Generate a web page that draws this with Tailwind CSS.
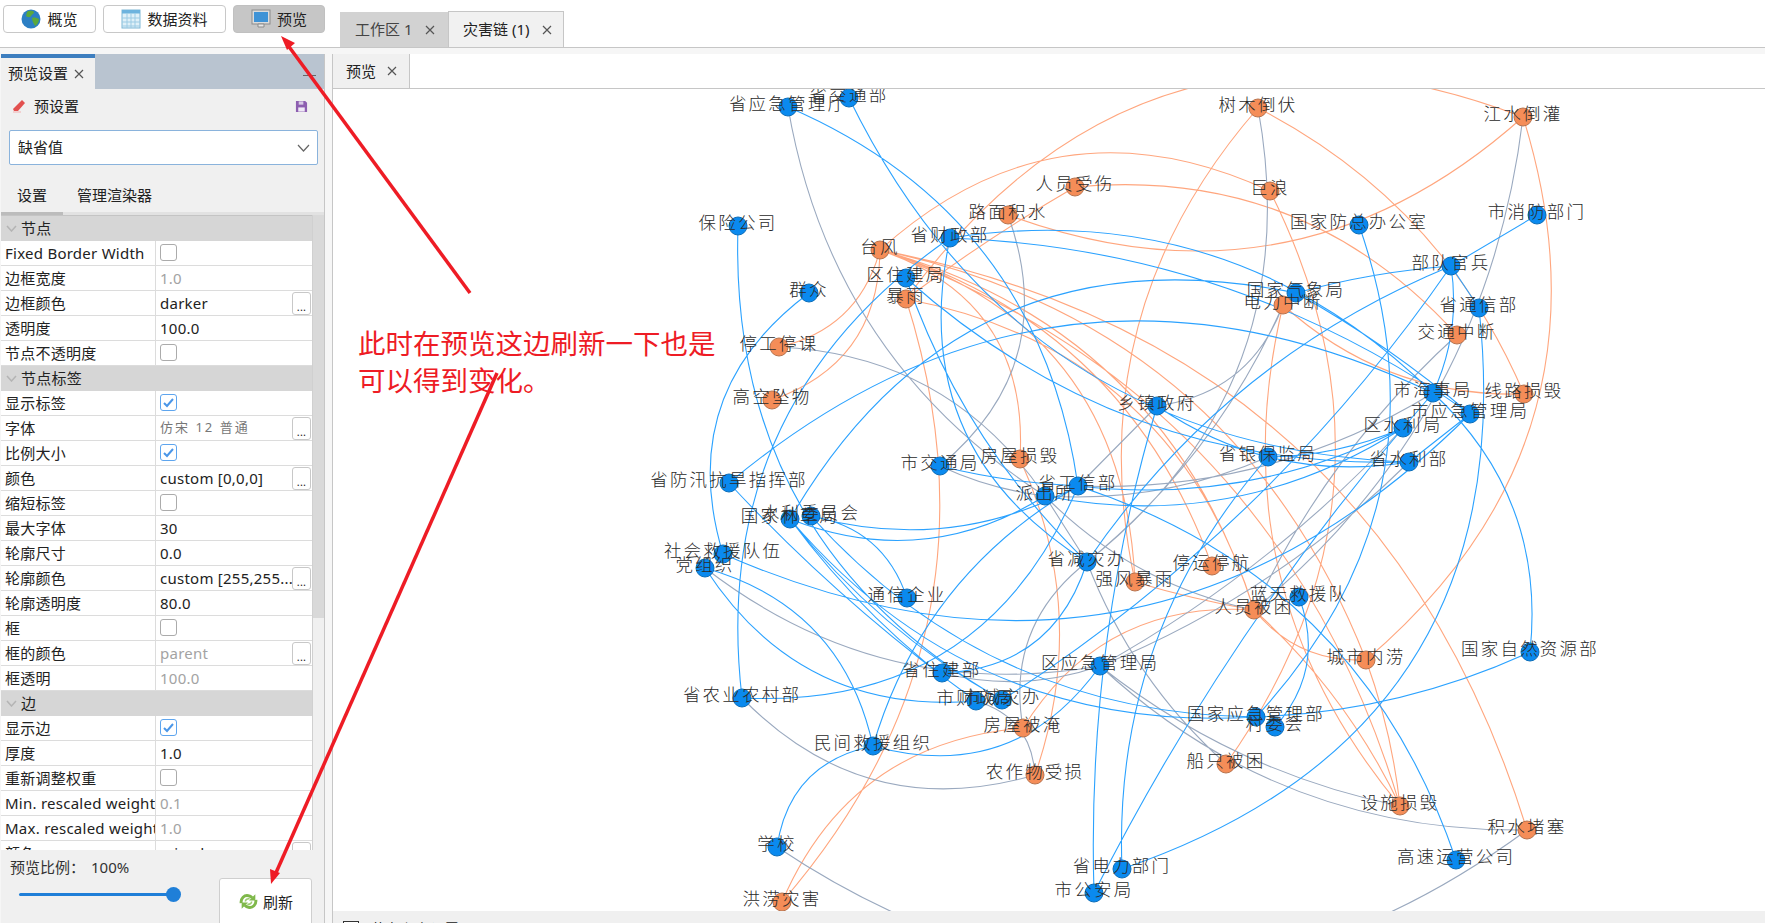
<!DOCTYPE html>
<html lang="en">
<head>
  <meta charset="UTF-8" />
  <title>灾害链 - 预览</title>
  <script src="https://cdn.jsdelivr.net/npm/@tailwindcss/browser@4"></script>
</head>
<body class="bg-[#f6f6f6] font-['Noto_Sans','Noto_Sans_CJK_SC',sans-serif] text-[#222]">
<div class="relative flex h-[923px] w-[1765px] flex-col overflow-hidden">

  <!-- Top bar -->
  <div class="flex h-[48px] shrink-0 border-b border-[#c6c6c6] bg-white">
    <div class="flex gap-[7px] pl-[3px] pt-[5px]">
      <button class="flex h-[28px] w-[93px] items-center justify-center gap-[6px] rounded-[4px] border border-[#c8c8c8] bg-white text-[15px]">
        <svg class="h-[20px] w-[20px]" viewBox="0 0 20 20"><circle cx="10" cy="10" r="9.5" fill="#2c7fc4"/><path d="M6 3c3-2 6-1 7 0 0 2-2 2-3 4-1 2-4 1-5 0zM11 9c2-1 5 0 7 1 0 3-2 6-4 7-1-2-3-5-3-8z" fill="#5aa83c"/></svg>
        <span>概览</span>
      </button>
      <button class="flex h-[28px] w-[123px] items-center justify-center gap-[6px] rounded-[4px] border border-[#c8c8c8] bg-white text-[15px]">
        <svg class="h-[20px] w-[20px]" viewBox="0 0 20 20"><rect x="1" y="1" width="18" height="18" fill="#dff0f8" stroke="#7fb7d6"/><rect x="1" y="1" width="18" height="3.5" fill="#6db3de"/><path d="M1 9h18M1 13h18M1 17h18M6 4v15M10 4v15M14 4v15" stroke="#9ccbe4"/></svg>
        <span>数据资料</span>
      </button>
      <button class="flex h-[28px] w-[92px] items-center justify-center gap-[6px] rounded-[4px] border border-[#c0c0c0] bg-[#c6c6c6] text-[15px]">
        <svg class="h-[20px] w-[20px]" viewBox="0 0 20 20"><rect x="1" y="1" width="18" height="14" fill="#dcdcdc" stroke="#8b8b8b"/><rect x="3" y="3" width="14" height="10" fill="#3f93d6"/><path d="M7 15h6v3H7z" fill="#e8e8e8" stroke="#8b8b8b"/></svg>
        <span>预览</span>
      </button>
    </div>
    <div class="ml-[15px] flex items-end self-end">
      <div class="flex h-[35px] w-[108px] items-center gap-[13px] bg-[#d2d2d2] pl-[15px] text-[15px] text-[#444]">
        <span>工作区 1</span>
        <svg class="h-[10px] w-[10px]" viewBox="0 0 10 10"><path d="M1 1l8 8M9 1l-8 8" stroke="#555" stroke-width="1.2"/></svg>
      </div>
      <div class="flex h-[36px] w-[116px] items-center gap-[13px] border border-b-0 border-[#c6c6c6] bg-[#f1f1f1] pl-[14px] text-[15px]">
        <span>灾害链 (1)</span>
        <svg class="h-[10px] w-[10px]" viewBox="0 0 10 10"><path d="M1 1l8 8M9 1l-8 8" stroke="#555" stroke-width="1.2"/></svg>
      </div>
    </div>
  </div>

  <div class="flex min-h-0 flex-1 pt-[6px]">
    <!-- Left panel -->
    <div class="ml-[1px] flex w-[324px] shrink-0 flex-col border-r border-[#c6c6c6] bg-[#f0f0f0]">
      <div class="flex h-[35px] shrink-0 bg-[#b9c4d0]">
        <div class="flex w-[94px] items-center gap-[6px] border-t-[4px] border-[#3d7ebf] bg-[#f0f0f0] pl-[7px] text-[15px]">
          <span>预览设置</span>
          <svg class="h-[10px] w-[10px]" viewBox="0 0 10 10"><path d="M1 1l8 8M9 1l-8 8" stroke="#555" stroke-width="1.2"/></svg>
        </div>
        <div class="ml-auto mr-[8px] mt-[21px] h-[1px] w-[13px] bg-[#666]"></div>
      </div>
      <div class="flex h-[41px] shrink-0 items-start pl-[11px] pr-[16px] pt-[6px] text-[15px]">
        <svg class="mr-[8px] mt-[4px] h-[14px] w-[14px]" viewBox="0 0 14 14"><path d="M10 1l3 3-7 8H2l-1-2z" fill="#e2504f"/><path d="M1 13h8" stroke="#f2b0b0"/></svg>
        <span>预设置</span>
        <svg class="ml-auto mt-[5px] h-[13px] w-[13px]" viewBox="0 0 14 14"><path d="M1 1h10l2 2v10H1z" fill="#8d5fb0"/><rect x="4" y="1.500" width="5" height="3.500" fill="#d8cbe6"/><rect x="3.500" y="8" width="7" height="4.500" fill="#efe9f6"/></svg>
      </div>
      <div class="ml-[8px] mr-[6px] flex h-[35px] shrink-0 items-center rounded-[2px] border border-[#8ab3dc] bg-white pl-[8px] pr-[7px] text-[15px]">
        <span>缺省值</span>
        <svg class="ml-auto h-[8px] w-[13px]" viewBox="0 0 13 8"><path d="M1 1l5.500 6L12 1" fill="none" stroke="#666" stroke-width="1.2"/></svg>
      </div>
      <div class="mt-[13px] flex h-[37px] shrink-0 border-b-[3px] border-[#e2e2e2] text-[15px]">
        <div class="mb-[-3px] flex w-[62px] items-center justify-center border-b-[3px] border-[#bcbcbc]">设置</div>
        <div class="ml-[14px] flex items-center">管理渲染器</div>
      </div>
      <div class="flex min-h-0 flex-1">
        <div id="rows" class="h-full w-[311px] shrink-0 overflow-hidden border-t border-[#c4c4c4] tracking-[0.25px]"></div>
        <div class="w-[12px] shrink-0 border-l border-[#d0d0d0]"><div class="h-[403px] bg-[#d9d9d9]"></div></div>
      </div>
      <div class="flex h-[73px] shrink-0">
        <div class="w-[218px] pl-[9px] pt-[6px] text-[15px] text-[#333]">
          <div class="flex gap-[6px]"><span>预览比例：</span><span>100%</span></div>
          <div class="relative ml-[9px] mt-[14px] h-[3px] w-[154px] rounded bg-[#1f7fd8]">
            <div class="absolute left-[147px] top-[-6px] h-[15px] w-[15px] rounded-full bg-[#1f7fd8]"></div>
          </div>
        </div>
        <button class="mt-[28px] flex h-[60px] w-[93px] items-start justify-center gap-[4px] rounded-[3px] border border-[#cfcfcf] bg-white pt-[12px] text-[15px]">
          <svg class="h-[21px] w-[21px]" viewBox="0 0 20 20"><path d="M3 11.500C2.500 7 6 3.500 10 4.500c1.500.3 2.500 1 3.500 2M17 8.500c.5 4.500-3 8-7 7-1.500-.3-2.500-1-3.500-2" fill="none" stroke="#7fb84a" stroke-width="2.800"/><path d="M16.500 3v6h-6zM3.500 17v-6h6z" fill="#7fb84a"/><path d="M7 10c0-2 2-3 4-2.500M13 10c0 2-2 3-4 2.500" fill="none" stroke="#9ccc6e" stroke-width="1.500"/></svg>
          <span>刷新</span>
        </button>
      </div>
    </div>

    <!-- Right area -->
    <div class="ml-[7px] flex min-w-0 flex-1 flex-col border-l border-[#c6c6c6]">
      <div class="flex h-[35px] shrink-0 border-b border-[#c6c6c6] bg-white">
        <div class="flex w-[77px] items-center gap-[11px] border-r border-[#c6c6c6] bg-[#f0f0f0] pl-[13px] text-[15px]">
          <span>预览</span>
          <svg class="h-[10px] w-[10px]" viewBox="0 0 10 10"><path d="M1 1l8 8M9 1l-8 8" stroke="#555" stroke-width="1.2"/></svg>
        </div>
      </div>
      <div class="relative min-h-0 flex-1 bg-white">
        <svg id="graph" class="absolute left-0 top-0 h-full w-full" viewBox="333 89 1432 822" preserveAspectRatio="none"></svg>
      </div>
      <div class="flex h-[12px] shrink-0 items-start gap-[12px] overflow-hidden bg-[#f0f0f0] pl-[10px] pt-[10px] text-[14px] leading-[16px]">
        <span class="h-[16px] w-[16px] shrink-0 border border-[#333] bg-white"></span><span>节点 颜色设置</span>
      </div>
    </div>
  </div>

  <!-- Red annotation over the page -->
  <svg class="pointer-events-none absolute left-0 top-0" width="1765" height="923" viewBox="0 0 1765 923">
    <path d="M470 293L287 44" stroke="#ee1c25" stroke-width="3.500" fill="none"/>
    <path d="M281 36l14 7-8 7z" fill="#ee1c25"/>
    <path d="M497 373L275 875" stroke="#ee1c25" stroke-width="3.500" fill="none"/>
    <path d="M271 884l-1-15 10 4z" fill="#ee1c25"/>
  </svg>
  <div class="absolute left-[358px] top-[325px] text-[27.500px] leading-[37px] text-[#ee1c25]">此时在预览这边刷新一下也是<br>可以得到变化。</div>
</div>

<script>
  // property sheet rows: [label, kind, value, hasButton]
  const rows = [
    ['节点'],
    ['Fixed Border Width', 'off'],
    ['边框宽度', 'dim', '1.0'],
    ['边框颜色', 'text', 'darker', true],
    ['透明度', 'text', '100.0'],
    ['节点不透明度', 'off'],
    ['节点标签'],
    ['显示标签', 'on'],
    ['字体', 'font', '仿宋 12 普通', true],
    ['比例大小', 'on'],
    ['颜色', 'text', 'custom [0,0,0]', true],
    ['缩短标签', 'off'],
    ['最大字体', 'text', '30'],
    ['轮廓尺寸', 'text', '0.0'],
    ['轮廓颜色', 'text', 'custom [255,255...', true],
    ['轮廓透明度', 'text', '80.0'],
    ['框', 'off'],
    ['框的颜色', 'dim', 'parent', true],
    ['框透明', 'dim', '100.0'],
    ['边'],
    ['显示边', 'on'],
    ['厚度', 'text', '1.0'],
    ['重新调整权重', 'off'],
    ['Min. rescaled weight', 'dim', '0.1'],
    ['Max. rescaled weight', 'dim', '1.0'],
    ['颜色', 'text', 'mixed', true]
  ];

  function rowHtml(r) {
    if (r.length === 1) {
      return `<div class="flex h-[25px] items-center bg-[#d6d6d6] text-[15px]">
        <svg class="ml-[5px] mr-[4px] h-[7px] w-[11px]" viewBox="0 0 11 7"><path d="M1 1l4.500 5L10 1" fill="none" stroke="#b4b4b4" stroke-width="1.500"/></svg>
        <span>${r[0]}</span></div>`;
    }
    const [label, kind, value, btn] = r;
    let cell = '';
    if (kind === 'off') cell = '<span class="mt-[-1px] block h-[17px] w-[17px] rounded-[3px] border border-[#ababab] bg-white"></span>';
    if (kind === 'on') cell = '<span class="mt-[-1px] flex h-[17px] w-[17px] items-center justify-center rounded-[3px] border border-[#5ea5ee] bg-white"><svg class="h-[11px] w-[11px]" viewBox="0 0 11 11"><path d="M1 6l3 3 6-7" fill="none" stroke="#4a96e8" stroke-width="2"/></svg></span>';
    if (kind === 'text') cell = `<span class="whitespace-nowrap">${value}</span>`;
    if (kind === 'dim') cell = `<span class="whitespace-nowrap text-[#a3a3a3]">${value}</span>`;
    if (kind === 'font') cell = `<span class="whitespace-nowrap text-[13px] tracking-[2px] text-[#777]">${value}</span>`;
    return `<div class="relative flex h-[25px] items-center border-b border-[#dcdcdc] bg-white text-[15px]">
      <div class="w-[155px] shrink-0 overflow-hidden whitespace-nowrap border-r border-[#dcdcdc] pl-[4px] leading-[24px]">${label}</div>
      <div class="flex h-full min-w-0 flex-1 items-center overflow-hidden pl-[4px]">${cell}</div>
      ${btn ? '<span class="absolute right-[1px] top-[1px] flex h-[23px] w-[19px] items-end justify-center rounded-[3px] border border-[#c8c8c8] bg-white text-[11px] leading-[14px]">...</span>' : ''}
    </div>`;
  }
  document.getElementById('rows').innerHTML = rows.map(rowHtml).join('');

  // graph nodes in page coordinates
  const nodes = {
    '省应急管理厅': [788,107,'b'], '省交通部': [849,98,'b'], '保险公司': [738,226,'b'], '台风': [880,250,'o'],
    '区住建局': [906,278,'b'], '暴雨': [906,299,'o'], '群众': [809,293,'b'], '停工停课': [779,347,'o'],
    '高空坠物': [772,400,'o'], '省防汛抗旱指挥部': [729,483,'b'], '省财政部': [950,238,'b'], '路面积水': [1008,215,'o'],
    '人员受伤': [1075,187,'o'], '市交通局': [940,466,'b'], '房屋损毁': [1020,459,'o'], '省工信部': [1078,486,'b'],
    '派出所': [1045,496,'b'], '乡镇政府': [1157,406,'b'], '树木倒伏': [1258,108,'o'], '江水倒灌': [1523,117,'o'],
    '巨浪': [1270,191,'o'], '国家防总办公室': [1359,225,'b'], '市消防部门': [1537,215,'b'], '部队官兵': [1451,266,'b'],
    '国家气象局': [1296,293,'b'], '电力中断': [1283,305,'o'], '省通信部': [1479,308,'b'], '交通中断': [1457,335,'o'],
    '市海事局': [1433,393,'b'], '线路损毁': [1524,394,'o'], '市应急管理局': [1470,414,'b'], '区水利局': [1403,428,'b'],
    '省水利部': [1409,462,'b'], '省银保监局': [1268,457,'b'], '国家林草局': [790,519,'b'], '水利委员会': [811,516,'b'],
    '社会救援队伍': [723,554,'b'], '党组织': [705,568,'b'], '通信企业': [907,598,'b'], '省减灾办': [1087,562,'b'],
    '强风暴雨': [1135,582,'o'], '省住建部': [942,673,'b'], '区应急管理局': [1100,666,'b'], '省农业农村部': [742,698,'b'],
    '市财政局': [976,701,'b'], '市减灾办': [1002,700,'b'], '房屋被淹': [1023,728,'o'], '民间救援组织': [873,746,'b'],
    '农作物受损': [1035,775,'o'], '学校': [777,847,'b'], '洪涝灾害': [782,902,'o'], '省电力部门': [1122,869,'b'],
    '市公安局': [1094,893,'b'], '停运停航': [1212,566,'o'], '蓝天救援队': [1299,597,'b'], '人员被困': [1254,610,'o'],
    '城市内涝': [1366,660,'o'], '国家自然资源部': [1530,652,'b'], '国家应急管理部': [1256,717,'b'], '村委会': [1275,727,'b'],
    '船只被困': [1226,764,'o'], '设施损毁': [1400,806,'o'], '积水堵塞': [1527,830,'o'], '高速运营公司': [1456,860,'b']
  };

  // edges: [from, to, bend]; positive bend leans to the left of the travel direction
  const blueEdges = [
    ['省应急管理厅','省工信部',.28], ['省交通部','省水利部',-.3], ['保险公司','市减灾办',-.3], ['群众','社会救援队伍',-.35],
    ['省财政部','省农业农村部',-.3], ['省财政部','省减灾办',-.35], ['省财政部','市海事局',.25], ['省财政部','市应急管理局',.15],
    ['区住建局','省减灾办',-.12], ['区住建局','省水利部',-.2], ['省防汛抗旱指挥部','市海事局',.32], ['国家林草局','国家气象局',.36],
    ['省防汛抗旱指挥部','市财政局',-.05], ['国家林草局','市减灾办',-.1], ['国家林草局','市财政局',-.08], ['国家林草局','国家应急管理部',-.25],
    ['社会救援队伍','市应急管理局',-.34], ['党组织','民间救援组织',.3], ['党组织','市财政局',-.3],
    ['省农业农村部','省工信部',-.35], ['水利委员会','通信企业',.3], ['水利委员会','省工信部',-.2], ['国家林草局','派出所',-.25],
    ['省住建部','省减灾办',-.35], ['民间救援组织','省工信部',.2], ['民间救援组织','区应急管理局',-.35], ['民间救援组织','学校',-.35],
    ['市减灾办','部队官兵',-.1], ['部队官兵','省减灾办',-.15], ['部队官兵','国家气象局',-.05], ['部队官兵','市消防部门',0],
    ['部队官兵','省通信部',0], ['部队官兵','市海事局',.15], ['省通信部','省电力部门',.4], ['国家防总办公室','国家应急管理部',.3],
    ['国家气象局','市应急管理局',.05], ['市海事局','国家自然资源部',.25], ['国家自然资源部','国家应急管理部',.1], ['水利委员会','国家应急管理部',-.22],
    ['蓝天救援队','村委会',.3], ['省工信部','高速运营公司',.25], ['省电力部门','省银保监局',.2], ['市公安局','乡镇政府',.08],
    ['市公安局','区水利局',.06], ['乡镇政府','省水利部',-.2], ['省银保监局','区水利局',-.1],
    ['省银保监局','省水利部',-.1], ['省工信部','区水利局',-.15], ['派出所','区水利局',-.2], ['市交通局','省工信部',-.05],
    ['市应急管理局','省水利部',0], ['市海事局','区水利局',0]
  ];
  const grayEdges = [
    ['省应急管理厅','派出所',-.22], ['路面积水','市交通局',.35], ['树木倒伏','省减灾办',.3], ['江水倒灌','人员被困',.2],
    ['停工停课','派出所',.25], ['党组织','区应急管理局',-.22], ['市海事局','省工信部',.15], ['交通中断','人员被困',-.1],
    ['电力中断','乡镇政府',.3], ['电力中断','省减灾办',.12], ['省减灾办','派出所',0], ['派出所','人员被困',-.15],
    ['派出所','省银保监局',-.12], ['省减灾办','房屋被淹',-.3], ['省减灾办','船只被困',-.12], ['区应急管理局','积水堵塞',-.2],
    ['区应急管理局','设施损毁',-.12], ['区应急管理局','区水利局',-.08], ['区应急管理局','省水利部',-.1], ['省住建部','区应急管理局',-.15],
    ['省农业农村部','农作物受损',-.3], ['农作物受损','市财政局',-.35], ['学校','积水堵塞',-.35], ['市交通局','派出所',-.08],
    ['省工信部','乡镇政府',0]
  ];
  const orangeEdges = [
    ['台风','停工停课',.3], ['台风','高空坠物',.35], ['台风','巨浪',.33], ['暴雨','江水倒灌',.38], ['人员受伤','交通中断',.25],
    ['路面积水','江水倒灌',-.3], ['人员受伤','暴雨',-.03], ['台风','房屋损毁',.38], ['台风','强风暴雨',.35], ['台风','人员被困',.27],
    ['台风','设施损毁',.25], ['台风','城市内涝',.27], ['台风','停运停航',.25], ['暴雨','人员被困',.3], ['暴雨','洪涝灾害',.28],
    ['房屋损毁','农作物受损',.2], ['房屋被淹','洪涝灾害',-.3], ['房屋被淹','人员被困',.3], ['巨浪','船只被困',.3], ['电力中断','设施损毁',-.25],
    ['电力中断','线路损毁',-.2], ['树木倒伏','强风暴雨',-.25], ['树木倒伏','线路损毁',.18], ['江水倒灌','城市内涝',.33], ['人员被困','设施损毁',.1],
    ['城市内涝','设施损毁',.06], ['人员被困','城市内涝',-.25], ['台风','积水堵塞',.3], ['强风暴雨','人员被困',-.03]
  ];

  function edgePath([a, b, bend]) {
    const [x1, y1] = nodes[a], [x2, y2] = nodes[b];
    const cx = (x1 + x2) / 2 + bend * (y2 - y1), cy = (y1 + y2) / 2 - bend * (x2 - x1);
    return `M${x1} ${y1}Q${cx.toFixed(1)} ${cy.toFixed(1)} ${x2} ${y2}`;
  }
  const layer = (list, color) => `<path d="${list.map(edgePath).join('')}" fill="none" stroke="${color}" stroke-width="1.1"/>`;

  let svg = layer(orangeEdges, '#ffa67e') + layer(grayEdges, '#9aa9bf') + layer(blueEdges, '#2ba2ff');
  for (const name in nodes) {
    const [x, y, t] = nodes[name];
    svg += `<circle cx="${x}" cy="${y}" r="9" fill="${t === 'b' ? '#0a8aef' : '#f58d58'}" stroke="${t === 'b' ? '#0b6db8' : '#b8734e'}"/>`;
  }
  for (const name in nodes) {
    const [x, y] = nodes[name];
    svg += `<text x="${x}" y="${y + 3}" text-anchor="middle" font-family="Noto Sans CJK SC, sans-serif" font-weight="300" font-size="17.5" letter-spacing="2.2" fill="#2a2a2a">${name}</text>`;
  }
  document.getElementById('graph').innerHTML = svg;
</script>
</body>
</html>
